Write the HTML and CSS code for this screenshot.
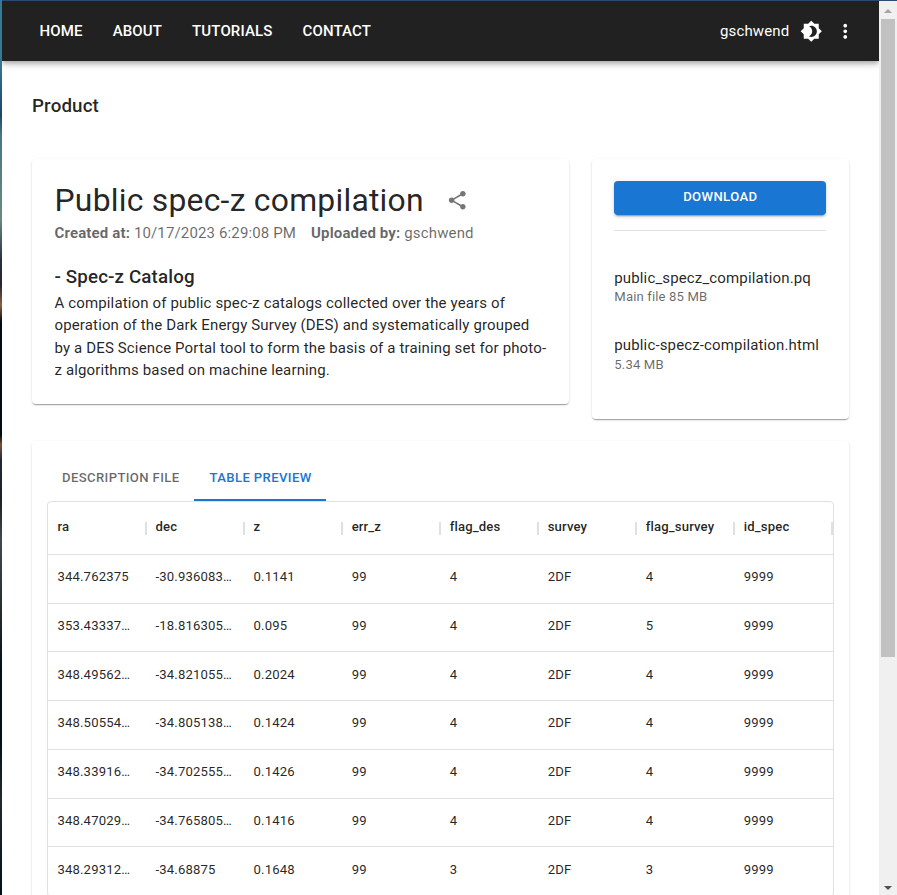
FILE: index.html
```html
<!DOCTYPE html>
<html lang="en">
<head>
<meta charset="utf-8">
<title>Public spec-z compilation</title>
<link rel="stylesheet" href="styles.css">
</head>
<body>
<div class="window">
  <div class="page">
    <header class="appbar">
      <nav class="nav"><a>HOME</a><a>ABOUT</a><a>TUTORIALS</a><a>CONTACT</a></nav>
      <div class="user">
        <span>gschwend</span>
        <svg class="theme-icon" viewBox="0 0 24 24"><path d="M20 8.69V4h-4.69L12 .69 8.69 4H4v4.69L.69 12 4 15.31V20h4.69L12 23.31 15.31 20H20v-4.69L23.31 12 20 8.69zM12 18c-.89 0-1.74-.2-2.5-.55C11.56 16.5 13 14.42 13 12s-1.44-4.5-3.5-5.45C10.26 6.2 11.11 6 12 6c3.31 0 6 2.69 6 6s-2.69 6-6 6z"/></svg>
        <svg class="more-icon" viewBox="0 0 24 24"><path d="M12 8c1.1 0 2-.9 2-2s-.9-2-2-2-2 .9-2 2 .9 2 2 2zm0 2c-1.1 0-2 .9-2 2s.9 2 2 2 2-.9 2-2-.9-2-2-2zm0 6c-1.1 0-2 .9-2 2s.9 2 2 2 2-.9 2-2-.9-2-2-2z"/></svg>
      </div>
    </header>
    <main class="main">
      <h6 class="crumb">Product</h6>
      <div class="top">
        <section class="card info">
          <div class="title-row">
            <h1>Public spec-z compilation</h1>
            <svg class="share-icon" viewBox="0 0 24 24"><path d="M18 16.08c-.76 0-1.44.3-1.96.77L8.91 12.7c.05-.23.09-.46.09-.7s-.04-.47-.09-.7l7.05-4.11c.54.5 1.25.81 2.04.81 1.66 0 3-1.34 3-3s-1.34-3-3-3-3 1.34-3 3c0 .24.04.47.09.7L8.04 9.81C7.5 9.31 6.79 9 6 9c-1.66 0-3 1.34-3 3s1.34 3 3 3c.79 0 1.5-.31 2.04-.81l7.12 4.16c-.05.21-.08.43-.08.65 0 1.61 1.31 2.92 2.92 2.92s2.92-1.31 2.92-2.92-1.31-2.92-2.92-2.92z"/></svg>
          </div>
          <div class="meta"><span><b>Created at:</b> 10/17/2023 6:29:08 PM</span><span><b>Uploaded by:</b> gschwend</span></div>
          <h2>- Spec-z Catalog</h2>
          <p>A compilation of public spec-z catalogs collected over the years of operation of the Dark Energy Survey (DES) and systematically grouped by a DES Science Portal tool to form the basis of a training set for photo-z algorithms based on machine learning.</p>
        </section>
        <aside class="card files">
          <button class="download">DOWNLOAD</button>
          <div class="file first"><div class="name">public_specz_compilation.pq</div><div class="size">Main file 85 MB</div></div>
          <div class="file"><div class="name">public-specz-compilation.html</div><div class="size">5.34 MB</div></div>
        </aside>
      </div>
      <section class="card preview">
        <div class="tabs"><div class="tab">DESCRIPTION FILE</div><div class="tab active">TABLE PREVIEW</div></div>
        <div class="grid">
          <div class="row head"><div>ra</div><div>dec</div><div>z</div><div>err_z</div><div>flag_des</div><div>survey</div><div>flag_survey</div><div>id_spec</div></div>
          <div class="row"><div>344.762375</div><div>-30.936083…</div><div>0.1141</div><div>99</div><div>4</div><div>2DF</div><div>4</div><div>9999</div></div>
          <div class="row"><div>353.43337…</div><div>-18.816305…</div><div>0.095</div><div>99</div><div>4</div><div>2DF</div><div>5</div><div>9999</div></div>
          <div class="row"><div>348.49562…</div><div>-34.821055…</div><div>0.2024</div><div>99</div><div>4</div><div>2DF</div><div>4</div><div>9999</div></div>
          <div class="row"><div>348.50554…</div><div>-34.805138…</div><div>0.1424</div><div>99</div><div>4</div><div>2DF</div><div>4</div><div>9999</div></div>
          <div class="row"><div>348.33916…</div><div>-34.702555…</div><div>0.1426</div><div>99</div><div>4</div><div>2DF</div><div>4</div><div>9999</div></div>
          <div class="row"><div>348.47029…</div><div>-34.765805…</div><div>0.1416</div><div>99</div><div>4</div><div>2DF</div><div>4</div><div>9999</div></div>
          <div class="row"><div>348.29312…</div><div>-34.68875</div><div>0.1648</div><div>99</div><div>3</div><div>2DF</div><div>3</div><div>9999</div></div>
        </div>
      </section>
    </main>
  </div>
  <div class="scrollbar"><i class="up"></i><i class="thumb"></i><i class="down"></i></div>
</div>
</body>
</html>
```
FILE: styles.css
```css
* { box-sizing: border-box; margin: 0; }
html { font-size: 15px; }
body {
  height: 895px;
  overflow: hidden;
  padding: 1px 0 0 2px;
  font-family: Roboto, sans-serif;
  color: rgba(0, 0, 0, .87);
  letter-spacing: .00938em;
  line-height: 1.5;
  background: linear-gradient(#2c4a70, #2c4a70) 2px 0 / 100% 1px no-repeat,
    linear-gradient(#357a94 0, #357a94 60px, #1c4664 115px, #487684 135px, #6b8880 220px, #262f42 260px, #26262e 285px, #8a6042 305px, #020a12 322px, #020a12 435px, #7a5038 445px, #202838 460px, #1c2028 500px, #404a4a 540px, #20282c 620px, #00101c 670px, #00101c 740px, #202a2c 800px, #001020 895px);
}
.window { display: flex; height: 894px; background: #fff; }
.page { flex: 1; min-width: 0; overflow: hidden; }
.appbar {
  position: relative;
  display: flex;
  justify-content: space-between;
  height: 60px;
  align-items: center;
  padding: 0 22.7px 0 37.5px;
  color: #fff;
  background: #212121;
  box-shadow: 0 2px 4px -1px rgba(0,0,0,.2), 0 4px 5px rgba(0,0,0,.14), 0 1px 10px rgba(0,0,0,.12);
}
.nav { display: flex; gap: 30px; font-weight: 500; }
.user { display: flex; align-items: center; }
.user svg { width: 22.5px; height: 22.5px; fill: #fff; }
.theme-icon { margin-left: 11px; }
.more-icon { margin-left: 11px; }
.main { padding: 30px; }
.crumb { font-size: 18.75px; font-weight: 500; line-height: 30px; letter-spacing: .0075em; }
.card {
  background: #fff;
  border-radius: 4px;
  box-shadow: 0 2px 1px -1px rgba(0,0,0,.2), 0 1px 1px rgba(0,0,0,.14), 0 1px 3px rgba(0,0,0,.12);
}
.top { display: flex; gap: 23px; align-items: flex-start; margin-top: 38px; }
.info { width: 537px; height: 245px; padding: 22px 22.5px; }
.title-row { display: flex; align-items: center; gap: 22px; height: 39px; }
h1 { font-size: 31.875px; font-weight: 400; line-height: 39px; letter-spacing: .00735em; }
.share-icon { width: 22.5px; height: 22.5px; fill: #757575; }
.meta { display: flex; gap: 15px; margin-top: 2px; color: rgba(0,0,0,.6); }
.meta b { font-weight: 700; }
h2 { margin-top: 17px; font-size: 18.75px; font-weight: 500; line-height: 30px; letter-spacing: .0075em; }
.files { width: 257px; height: 260px; padding: 22px 22.7px 22px 22.3px; }
.download {
  display: block;
  width: 100%;
  height: 34px;
  padding: 0 0 2px;
  border: 0;
  border-radius: 4px;
  color: #fff;
  background: #1976d2;
  font: 500 13.125px/1.75 Roboto, sans-serif;
  letter-spacing: .02857em;
  box-shadow: 0 3px 1px -2px rgba(0,0,0,.2), 0 2px 2px rgba(0,0,0,.14), 0 1px 5px rgba(0,0,0,.12);
}
.file { padding-top: 28px; }
.file.first { margin-top: 15px; padding-top: 36px; border-top: 1px solid rgba(0,0,0,.12); }
.size { font-size: 13.125px; line-height: 1.43; letter-spacing: .01071em; margin-top: -1px; color: rgba(0,0,0,.6); }
.first .size { margin: -2px 0 0; }
.preview { margin-top: 22px; width: 817px; height: 500px; padding: 15px; }
.tabs { display: flex; height: 45px; }
.tab {
  padding: 0 15px;
  font-size: 13.125px;
  font-weight: 500;
  line-height: 44px;
  letter-spacing: .02857em;
  color: rgba(0,0,0,.6);
}
.tab.active { margin-left: -.4px; padding-left: 15.4px; padding-right: 14.6px; color: #1976d2; border-bottom: 2px solid #1976d2; }
.grid { border: 1px solid #e0e0e0; border-radius: 4px; overflow: hidden; }
.row {
  display: grid;
  grid-template-columns: repeat(8, 98.06px);
  height: 48.75px;
  padding-top: .22px;
  border-bottom: 1px solid #e0e0e0;
  font-size: 13.125px;
  line-height: 44px;
  letter-spacing: .01071em;
}
.row div { padding-left: 9.5px; white-space: nowrap; }
.head { height: 52.8px; padding-top: 0; font-weight: 500; line-height: 50px; }
.head div { position: relative; }
.head div::after {
  content: "";
  position: absolute;
  top: 20px;
  right: -1px;
  width: 2px;
  height: 13px;
  background: #e0e0e0;
}
.scrollbar { position: relative; width: 18px; background: #f0f0f0; }
.scrollbar i { position: absolute; }
.thumb { left: 2px; top: 18px; width: 14px; height: 638px; background: #c1c1c1; }
.up, .down { left: 5px; border: 4px solid transparent; }
.up { top: 4px; border-bottom-color: #a3a3a3; }
.down { top: 885px; border-top-color: #505050; }
```
